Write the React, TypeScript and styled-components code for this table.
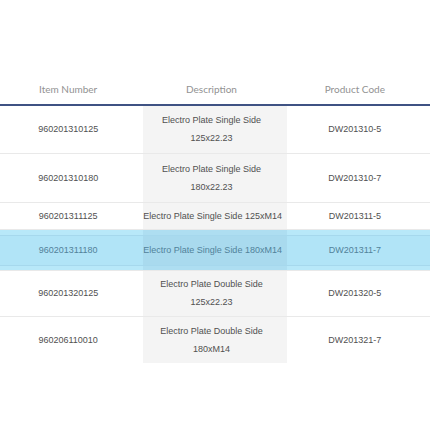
import styled, {createGlobalStyle, css} from 'styled-components';

const ROWS = [
   {item: '960201310125', desc: ['Electro Plate Single Side', '125x22.23'], code: 'DW201310-5', height: 48},
   {item: '960201310180', desc: ['Electro Plate Single Side', '180x22.23'], code: 'DW201310-7', height: 49},
   {item: '960201311125', desc: ['Electro Plate Single Side 125xM14'], code: 'DW201311-5', height: 27},
   {item: '960201311180', desc: ['Electro Plate Single Side 180xM14'], code: 'DW201311-7', height: 41, active: true},
   {item: '960201320125', desc: ['Electro Plate Double Side', '125x22.23'], code: 'DW201320-5', height: 46},
   {item: '960206110010', desc: ['Electro Plate Double Side', '180xM14'], code: 'DW201321-7', height: 47},
];

const GlobalStyle = createGlobalStyle`
   body {
      margin: 0;
      background: #fff;
   }
`;

const Page = styled.div`
   padding-top: 74px;
   width: 430px;
`;

const Table = styled.table`
   width: 100%;
   border-collapse: collapse;
   table-layout: fixed;
`;

const HeadCell = styled.th`
   height: 30px;
   padding: 0 7px 0 0;
   font-family: Lato, 'Open Sans', sans-serif;
   font-size: 10px;
   font-weight: 400;
   color: #929292;
   text-align: center;
   vertical-align: middle;
   border-bottom: 2px solid #3f5283;
`;

const Row = styled.tr<{$height: number; $last: boolean}>`
   height: ${props => props.$height}px;
   ${props =>
      !props.$last &&
      css`
         border-bottom: 1px solid #e9e9e9;
      `}
`;

const Cell = styled.td<{$shaded?: boolean; $active?: boolean}>`
   padding: 0 7px 0 0;
   font-family: 'Liberation Sans', Arial, sans-serif;
   font-size: 9px;
   line-height: 18px;
   color: #505050;
   text-align: center;
   vertical-align: middle;
   white-space: nowrap;
   background: ${props => (props.$shaded ? '#f4f4f4' : 'transparent')};
   ${props =>
      props.$active &&
      css`
         color: #51829a;
         background: ${props.$shaded ? '#a9daee' : '#b1e4f7'};
         box-shadow: inset 0 5px 0 ${props.$shaded ? '#aedef1' : '#b8e8f9'},
            inset 0 6px 0 #a6d8ed, inset 0 -4px 0 ${props.$shaded ? '#aedef1' : '#b8e8f9'},
            inset 0 -5px 0 #a6d8ed;
      `}
`;

const App = () => (
   <>
      <GlobalStyle />
      <Page>
         <Table>
            <thead>
               <tr>
                  <HeadCell>Item Number</HeadCell>
                  <HeadCell>Description</HeadCell>
                  <HeadCell>Product Code</HeadCell>
               </tr>
            </thead>
            <tbody>
               {ROWS.map((row, i) => (
                  <Row key={row.item} $height={row.height} $last={i === ROWS.length - 1}>
                     <Cell $active={row.active}>{row.item}</Cell>
                     <Cell $shaded $active={row.active}>
                        {row.desc.map((line, j) => (
                           <div key={j}>{line}</div>
                        ))}
                     </Cell>
                     <Cell $active={row.active}>{row.code}</Cell>
                  </Row>
               ))}
            </tbody>
         </Table>
      </Page>
   </>
);

export default App;
